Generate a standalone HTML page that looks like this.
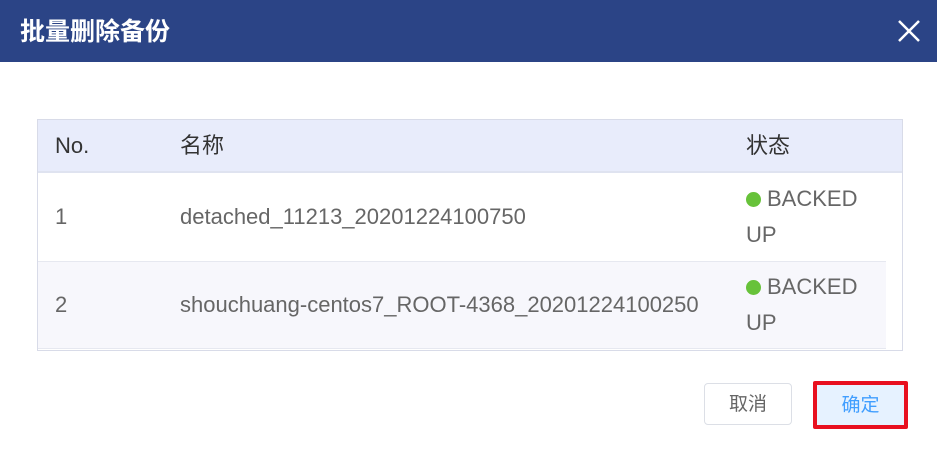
<!DOCTYPE html>
<html><head><meta charset="utf-8"><style>
*{margin:0;padding:0;box-sizing:border-box}
body{width:937px;height:451px;background:#fff;font-family:"Liberation Sans","Noto Sans CJK SC",sans-serif;position:relative;overflow:hidden;color:#666}
.hd{position:absolute;left:0;top:0;width:937px;height:62px;background:#2b4486}
.hd .t{position:absolute;left:20px;top:17px;font-size:25px;line-height:30px;font-weight:bold;color:#fff}
.x{position:absolute;left:897px;top:19px}
.tb{position:absolute;left:37px;top:119px;width:866px;height:232px;border:1px solid #d8dbe8}
.h{position:absolute;left:0;top:0;width:864px;height:53px;background:#e8ecfb;border-bottom:2px solid #dfe3f0}
.r{position:absolute;left:0;width:848px}
.r1{top:53px;height:89px;background:#fff;border-bottom:1px solid #e6e8f0}
.r2{top:142px;height:87px;background:#f7f7fc;border-bottom:1px solid #e6e8f0}
.c{position:absolute;font-size:22px;line-height:26px;white-space:nowrap}
.h .c{color:#333;top:13px}
.s{position:absolute;left:708px;font-size:22px;line-height:36px;color:#666}
.d{display:inline-block;width:15px;height:15px;border-radius:50%;background:#67c23a;margin-right:6px;vertical-align:-1px}
.b1{position:absolute;left:704px;top:383px;width:88px;height:42px;border:1px solid #dcdfe6;border-radius:4px;font-size:19px;color:#666;text-align:center;line-height:41px}
.b2{position:absolute;left:813px;top:381px;width:95px;height:48px;border:4px solid #e8101f;border-radius:2px;background:#e6f2ff;font-size:19px;color:#409eff;text-align:center;line-height:41px}
</style></head><body>
<div class="hd"><div class="t">批量删除备份</div>
<svg class="x" width="24" height="24" viewBox="0 0 24 24"><path d="M2 2L22 22M22 2L2 22" stroke="#fff" stroke-width="2.5"/></svg></div>
<div class="tb">
<div class="h"><span class="c" style="left:17px">No.</span><span class="c" style="left:142px">名称</span><span class="c" style="left:708px">状态</span></div>
<div class="r r1"><span class="c" style="left:17px;top:31px">1</span><span class="c" style="left:142px;top:31px">detached_11213_20201224100750</span><div class="s" style="top:8px"><span class="d"></span>BACKED<br>UP</div></div>
<div class="r r2"><span class="c" style="left:17px;top:30px">2</span><span class="c" style="left:142px;top:30px">shouchuang-centos7_ROOT-4368_20201224100250</span><div class="s" style="top:7px"><span class="d"></span>BACKED<br>UP</div></div>
</div>
<div class="b1">取消</div>
<div class="b2">确定</div>
</body></html>
